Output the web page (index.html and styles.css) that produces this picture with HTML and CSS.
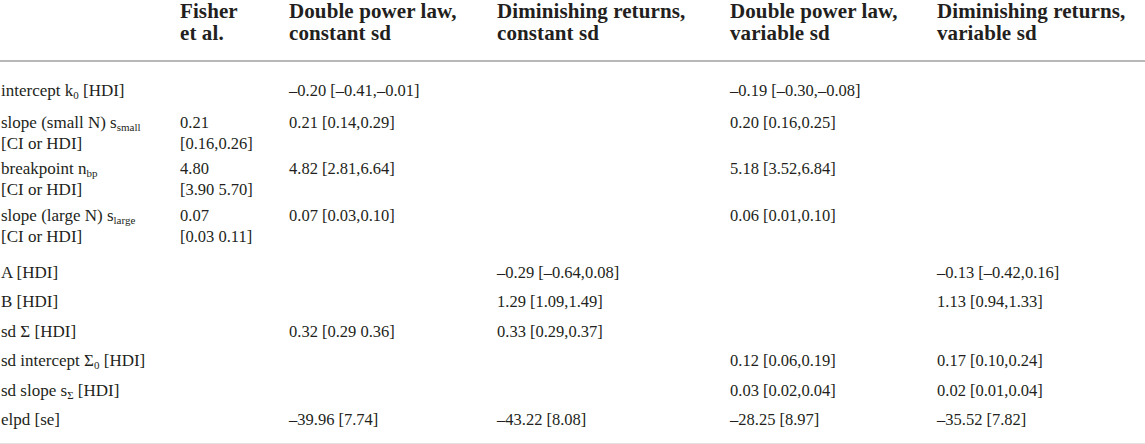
FILE: index.html
```html
<!DOCTYPE html>
<html lang="en">
<head>
<meta charset="utf-8">
<title>Model comparison table</title>
<link rel="stylesheet" href="styles.css">
</head>
<body>
<table class="results">
  <colgroup>
    <col class="c1"><col class="c2"><col class="c3"><col class="c4"><col class="c5"><col class="c6">
  </colgroup>
  <thead>
    <tr>
      <th></th>
      <th>Fisher<br>et al.</th>
      <th>Double power law,<br>constant sd</th>
      <th>Diminishing returns,<br>constant sd</th>
      <th>Double power law,<br>variable sd</th>
      <th>Diminishing returns,<br>variable sd</th>
    </tr>
  </thead>
  <tbody>
    <tr class="first">
      <td>intercept k<sub>0</sub> [HDI]</td>
      <td></td>
      <td>–0.20 [–0.41,–0.01]</td>
      <td></td>
      <td>–0.19 [–0.30,–0.08]</td>
      <td></td>
    </tr>
    <tr class="two open">
      <td>slope (small N) s<sub>small</sub><br>[CI or HDI]</td>
      <td>0.21<br>[0.16,0.26]</td>
      <td>0.21 [0.14,0.29]</td>
      <td></td>
      <td>0.20 [0.16,0.25]</td>
      <td></td>
    </tr>
    <tr class="two">
      <td>breakpoint n<sub>bp</sub><br>[CI or HDI]</td>
      <td>4.80<br>[3.90 5.70]</td>
      <td>4.82 [2.81,6.64]</td>
      <td></td>
      <td>5.18 [3.52,6.84]</td>
      <td></td>
    </tr>
    <tr class="two close">
      <td>slope (large N) s<sub>large</sub><br>[CI or HDI]</td>
      <td>0.07<br>[0.03 0.11]</td>
      <td>0.07 [0.03,0.10]</td>
      <td></td>
      <td>0.06 [0.01,0.10]</td>
      <td></td>
    </tr>
    <tr class="after">
      <td>A [HDI]</td>
      <td></td>
      <td></td>
      <td>–0.29 [–0.64,0.08]</td>
      <td></td>
      <td>–0.13 [–0.42,0.16]</td>
    </tr>
    <tr>
      <td>B [HDI]</td>
      <td></td>
      <td></td>
      <td>1.29 [1.09,1.49]</td>
      <td></td>
      <td>1.13 [0.94,1.33]</td>
    </tr>
    <tr>
      <td>sd Σ [HDI]</td>
      <td></td>
      <td>0.32 [0.29 0.36]</td>
      <td>0.33 [0.29,0.37]</td>
      <td></td>
      <td></td>
    </tr>
    <tr>
      <td>sd intercept Σ<sub>0</sub> [HDI]</td>
      <td></td>
      <td></td>
      <td></td>
      <td>0.12 [0.06,0.19]</td>
      <td>0.17 [0.10,0.24]</td>
    </tr>
    <tr>
      <td>sd slope s<sub>Σ</sub> [HDI]</td>
      <td></td>
      <td></td>
      <td></td>
      <td>0.03 [0.02,0.04]</td>
      <td>0.02 [0.01,0.04]</td>
    </tr>
    <tr class="last">
      <td>elpd [se]</td>
      <td></td>
      <td>–39.96 [7.74]</td>
      <td>–43.22 [8.08]</td>
      <td>–28.25 [8.97]</td>
      <td>–35.52 [7.82]</td>
    </tr>
  </tbody>
</table>
</body>
</html>
```

FILE: styles.css
```css
html, body {
  margin: 0;
  padding: 0;
  background: #ffffff;
}

body {
  font-family: "Liberation Serif", "Times New Roman", serif;
  color: #231f20;
}

.results {
  border-collapse: collapse;
  table-layout: fixed;
  width: 1145px;
}

.c1 { width: 180px; }
.c2 { width: 109px; }
.c3 { width: 208px; }
.c4 { width: 233px; }
.c5 { width: 207px; }
.c6 { width: 208px; }

.results th {
  text-align: left;
  vertical-align: top;
  font-weight: bold;
  font-size: 21px;
  letter-spacing: 0.1px;
  line-height: 22px;
  padding: 0 0 16px 0;
  border-bottom: 2px solid #b8b8b8;
  white-space: nowrap;
}

.results td {
  text-align: left;
  vertical-align: top;
  font-size: 16.5px;
  line-height: 21px;
  padding: 4px 0 4.5px 0;
  white-space: nowrap;
}

.results td:first-child {
  padding-left: 1px;
  font-size: 17px;
}

.results tr.first td {
  padding-top: 17.5px;
  padding-bottom: 5.5px;
}

.results tr.two td {
  padding-top: 2px;
  padding-bottom: 2.5px;
}

.results tr.two.open td {
  padding-top: 5.5px;
}

.results tr.two.close td {
  padding-bottom: 7.5px;
}

.results tr.after td {
  padding-top: 7.5px;
}

.results tr.last td {
  padding-bottom: 13px;
  border-bottom: 1px solid #e2e2e2;
}

.results sub {
  font-size: 11px;
  line-height: 0;
  vertical-align: -3px;
}
```
